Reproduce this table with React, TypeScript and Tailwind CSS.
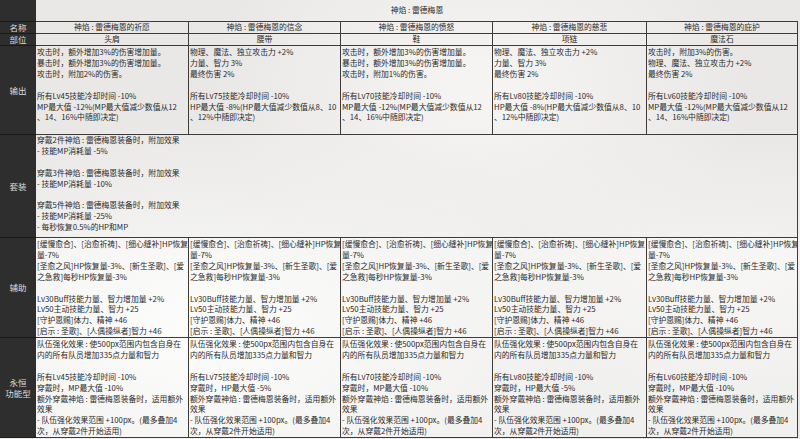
import React from "react";

type Col = {
  name: string;
  part: string;
  output: string[];
  eternal: string[];
};

const HP = "HP最大值 -8%(HP最大值减少数值从8、10";
const MP = "MP最大值 -12%(MP最大值减少数值从12";

const eternalTail = [
  "额外穿戴神焰 : 雷德梅恩装备时，适用额外",
  "效果",
  "- 队伍强化效果范围  +100px。(最多叠加4",
  "次，从穿戴2件开始适用)",
];

const eternalHead = [
  "队伍强化效果 : 使500px范围内包含自身在",
  "内的所有队员增加335点力量和智力",
  "",
];

const cols: Col[] = [
  {
    name: "神焰 : 雷德梅恩的祈愿",
    part: "头肩",
    output: [
      "攻击时，额外增加3%的伤害增加量。",
      "暴击时，额外增加3%的伤害增加量。",
      "攻击时，附加2%的伤害。",
      "",
      "所有Lv45技能冷却时间 -10%",
      MP,
      "、14、16%中随即决定)",
    ],
    eternal: [...eternalHead, "所有Lv45技能冷却时间 -10%", "穿戴时，MP最大值 -10%", ...eternalTail],
  },
  {
    name: "神焰 : 雷德梅恩的信念",
    part: "腰带",
    output: [
      "物理、魔法、独立攻击力 +2%",
      "力量、智力 3%",
      "最终伤害 2%",
      "",
      "所有Lv75技能冷却时间 -10%",
      HP,
      "、12%中随即决定)",
    ],
    eternal: [...eternalHead, "所有Lv75技能冷却时间 -10%", "穿戴时，HP最大值 -5%", ...eternalTail],
  },
  {
    name: "神焰 : 雷德梅恩的愤怒",
    part: "鞋",
    output: [
      "攻击时，额外增加3%的伤害增加量。",
      "暴击时，额外增加3%的伤害增加量。",
      "攻击时，附加1%的伤害。",
      "",
      "所有Lv70技能冷却时间 -10%",
      MP,
      "、14、16%中随即决定)",
    ],
    eternal: [...eternalHead, "所有Lv70技能冷却时间 -10%", "穿戴时，MP最大值 -10%", ...eternalTail],
  },
  {
    name: "神焰 : 雷德梅恩的慈悲",
    part: "项链",
    output: [
      "物理、魔法、独立攻击力 +2%",
      "力量、智力 3%",
      "最终伤害 2%",
      "",
      "所有Lv80技能冷却时间 -10%",
      HP,
      "、12%中随即决定)",
    ],
    eternal: [...eternalHead, "所有Lv80技能冷却时间 -10%", "穿戴时，HP最大值 -5%", ...eternalTail],
  },
  {
    name: "神焰 : 雷德梅恩的庇护",
    part: "魔法石",
    output: [
      "攻击时，附加3%的伤害。",
      "物理、魔法、独立攻击力 +2%",
      "最终伤害 2%",
      "",
      "所有Lv60技能冷却时间 -10%",
      MP,
      "、14、16%中随即决定)",
    ],
    eternal: [...eternalHead, "所有Lv60技能冷却时间 -10%", "穿戴时，MP最大值 -10%", ...eternalTail],
  },
];

const support = [
  "[缓慢愈合]、[治愈祈祷]、[细心缝补]HP恢复",
  "量-7%",
  "[圣愈之风]HP恢复量-3%、[新生圣歌]、[爱",
  "之急救]每秒HP恢复量-3%",
  "",
  "Lv30Buff技能力量、智力增加量 +2%",
  "Lv50主动技能力量、智力 +25",
  "[守护恩赐]体力、精神 +46",
  "[启示 : 圣歌]、[人偶操纵者]智力 +46",
];

const setLines = [
  "穿戴2件神焰 : 雷德梅恩装备时，附加效果",
  "- 技能MP消耗量 -5%",
  "",
  "穿戴3件神焰 : 雷德梅恩装备时，附加效果",
  "- 技能MP消耗量 -10%",
  "",
  "穿戴5件神焰 : 雷德梅恩装备时，附加效果",
  "- 技能MP消耗量 -25%",
  "- 每秒恢复0.5%的HP和MP",
];

function Lines({ lines }: { lines: string[] }) {
  return (
    <>
      {lines.map((t, i) => (
        <div key={i} className="whitespace-nowrap">
          {t === "" ? "\u00a0" : t}
        </div>
      ))}
    </>
  );
}

function Label({ children }: { children: React.ReactNode }) {
  return (
    <div className="bg-[#2e2e2e] border-b border-[#1a1a1a] text-[#dcdcdc] flex flex-col items-center justify-center text-[8.5px] leading-[11px]">
      {children}
    </div>
  );
}

const cell = "border-r border-b border-[#3c3c3c] overflow-hidden pl-px pt-px";
const head = "border-r border-b border-[#3c3c3c] overflow-hidden flex items-center justify-center whitespace-nowrap";

export default function App() {
  return (
    <div className="w-[800px] h-[439px] overflow-hidden bg-[#e9e8e6] bg-[radial-gradient(ellipse_at_25%_75%,#fbfbfa_0%,rgba(251,251,250,0)_45%),radial-gradient(ellipse_at_60%_20%,#f6f5f3_0%,rgba(246,245,243,0)_40%),radial-gradient(ellipse_at_90%_60%,#f4f3f1_0%,rgba(244,243,241,0)_35%)] font-['Noto_Sans_CJK_SC','Noto_Sans',sans-serif] text-[#2a2a2a] text-[7.8px] leading-[10.9px]">
      <div className="grid grid-cols-[36px_153px_152px_152px_154px_151px] grid-rows-[22px_12px_12px_89px_103px_100px_100px] w-[798px]">
        <Label>{null}</Label>
        <div className="col-span-5 border-b border-[#3c3c3c] flex items-center justify-center">
          神焰 : 雷德梅恩
        </div>

        <Label>名称</Label>
        {cols.map((c) => (
          <div key={c.name} className={head}>
            {c.name}
          </div>
        ))}

        <Label>部位</Label>
        {cols.map((c) => (
          <div key={c.part} className={head}>
            {c.part}
          </div>
        ))}

        <Label>输出</Label>
        {cols.map((c) => (
          <div key={c.name + "o"} className={cell}>
            <Lines lines={c.output} />
          </div>
        ))}

        <Label>套装</Label>
        <div className="col-span-5 border-r border-b border-[#3c3c3c] overflow-hidden pl-px">
          <Lines lines={setLines} />
        </div>

        <Label>辅助</Label>
        {cols.map((c) => (
          <div key={c.name + "s"} className={cell + " bg-[rgba(255,255,255,0.35)] pt-[1.5px]"}>
            <Lines lines={support} />
          </div>
        ))}

        <Label>
          <div>永恒</div>
          <div>功能型</div>
        </Label>
        {cols.map((c) => (
          <div key={c.name + "e"} className={cell + " bg-[rgba(255,255,255,0.35)] pt-[1.5px]"}>
            <Lines lines={c.eternal} />
          </div>
        ))}
      </div>
    </div>
  );
}
